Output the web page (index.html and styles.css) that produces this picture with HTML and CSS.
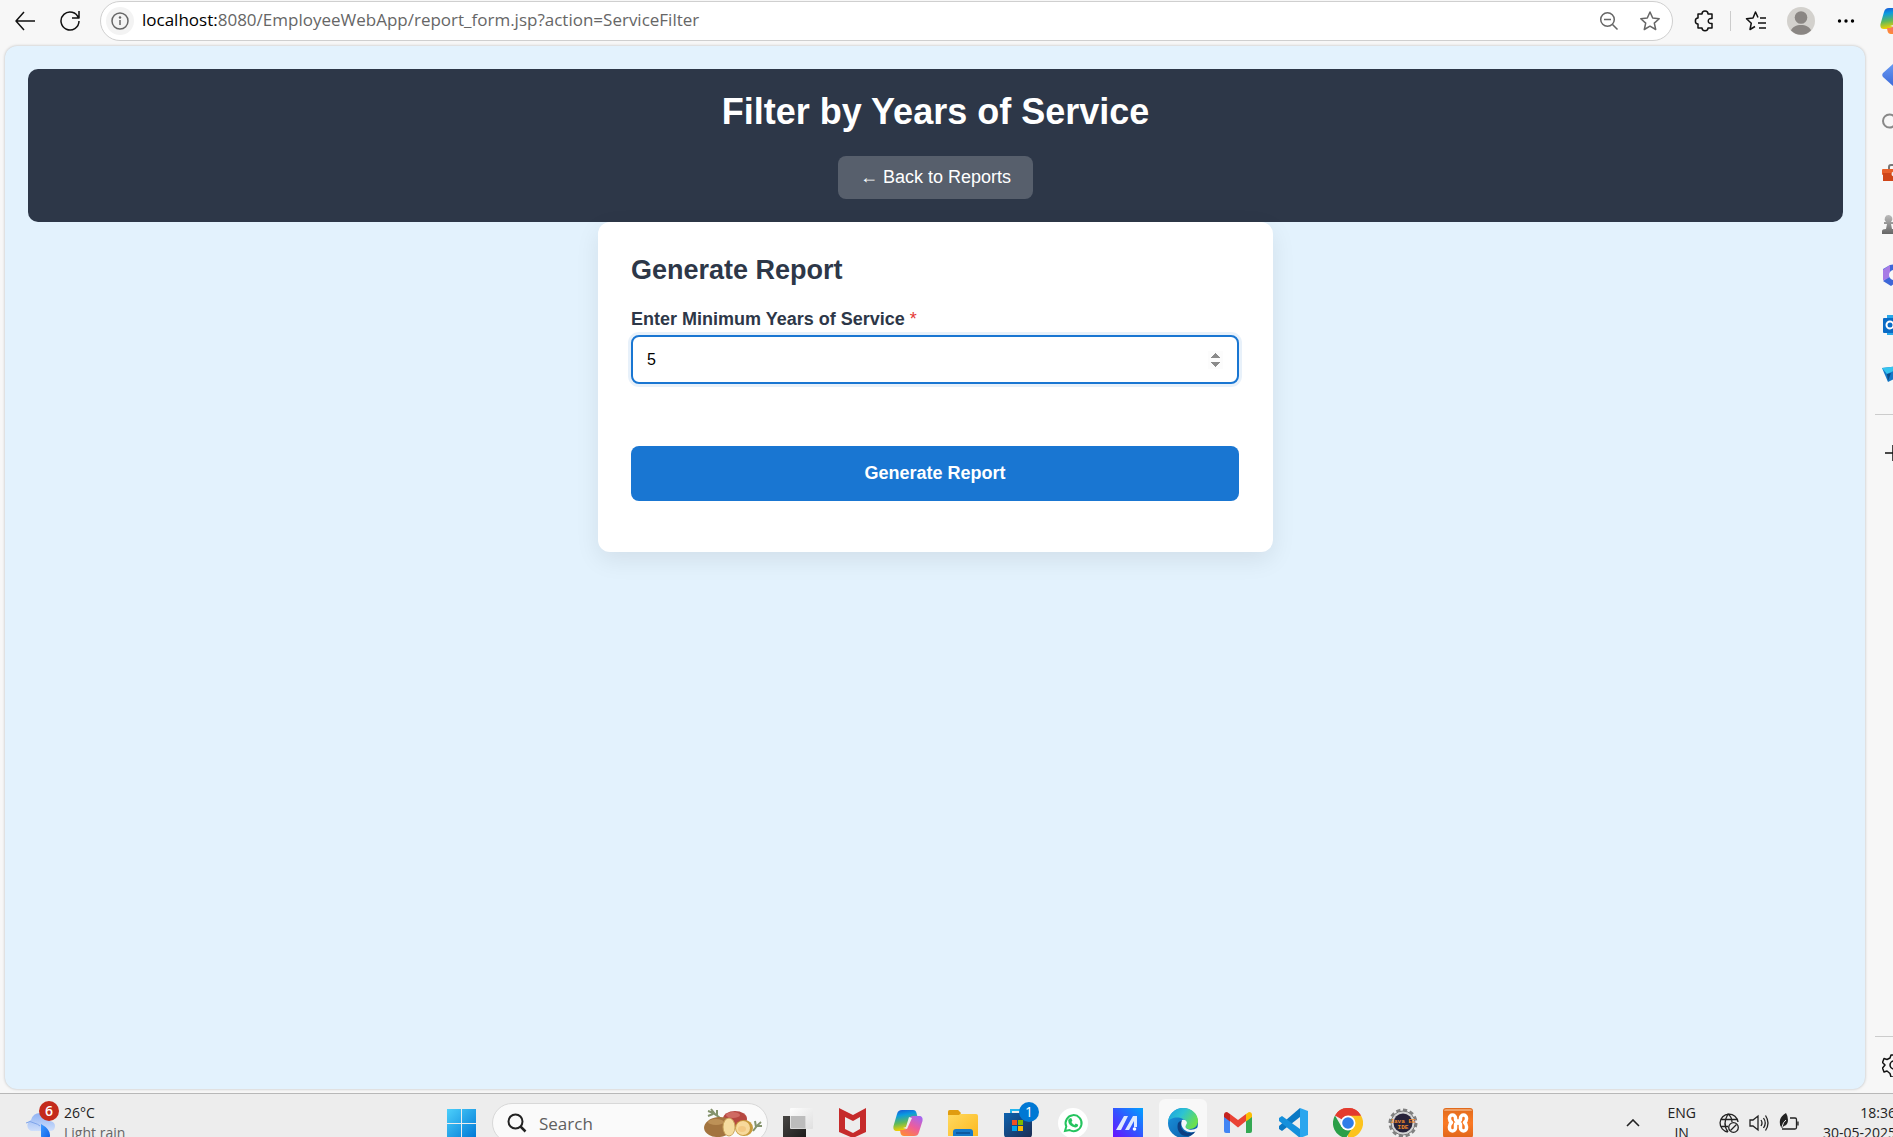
FILE: index.html
```html
<!DOCTYPE html>
<html lang="en">
<head>
<meta charset="utf-8">
<title>Filter by Years of Service</title>
<link rel="stylesheet" href="styles.css">
</head>
<body>
<svg class="defs" aria-hidden="true">
  <defs>
    <linearGradient id="cop1" x1="0" y1="0" x2="0.2" y2="1"><stop offset="0" stop-color="#1b4fd8"/><stop offset=".3" stop-color="#0a9be0"/><stop offset=".65" stop-color="#5fb95b"/><stop offset="1" stop-color="#f5d000"/></linearGradient>
    <linearGradient id="cop2" x1="0.8" y1="0" x2="0.2" y2="1"><stop offset="0" stop-color="#a666f0"/><stop offset=".5" stop-color="#ee5d9a"/><stop offset="1" stop-color="#ff8a35"/></linearGradient>
    <linearGradient id="win" x1="0" y1="0" x2="1" y2="1"><stop offset="0" stop-color="#4cd0fb"/><stop offset="1" stop-color="#0078d6"/></linearGradient>
    <linearGradient id="cloud" x1="0" y1="0" x2="0" y2="1"><stop offset="0" stop-color="#8fb2f3"/><stop offset="1" stop-color="#cfdffb"/></linearGradient>
    <linearGradient id="drop" x1="0" y1="0" x2="1" y2="1"><stop offset="0" stop-color="#3f9bff"/><stop offset="1" stop-color="#0a5ee8"/></linearGradient>
    <linearGradient id="dark" x1="0" y1="0" x2="1" y2="1"><stop offset="0" stop-color="#484644"/><stop offset="1" stop-color="#1d1c1b"/></linearGradient>
    <linearGradient id="glass" x1="0" y1="0" x2="1" y2="1"><stop offset="0" stop-color="#fff"/><stop offset="1" stop-color="#dedede"/></linearGradient>
    <linearGradient id="fold" x1="0" y1="0" x2="1" y2="1"><stop offset="0" stop-color="#ffdc66"/><stop offset="1" stop-color="#fcb91f"/></linearGradient>
    <linearGradient id="store" x1="0" y1="0" x2="1" y2="1"><stop offset="0" stop-color="#0d62b0"/><stop offset="1" stop-color="#1c2c50"/></linearGradient>
    <linearGradient id="asus" x1="1" y1="0" x2="0" y2="1"><stop offset="0" stop-color="#00a2ff"/><stop offset=".5" stop-color="#3355ff"/><stop offset="1" stop-color="#6a10ff"/></linearGradient>
    <linearGradient id="edge1" x1="0" y1="0" x2="1" y2="0.5"><stop offset="0" stop-color="#1b9de2"/><stop offset=".5" stop-color="#2dc3d2"/><stop offset="1" stop-color="#6ae04f"/></linearGradient>
    <linearGradient id="edge2" x1="0" y1="0" x2="1" y2="1"><stop offset="0" stop-color="#1a95e0"/><stop offset="1" stop-color="#0c59a4"/></linearGradient>
    <linearGradient id="xam" x1="0" y1="0" x2="0" y2="1"><stop offset="0" stop-color="#e06a1c"/><stop offset=".5" stop-color="#fb7a24"/><stop offset="1" stop-color="#e0661b"/></linearGradient>
    <linearGradient id="dia" x1="0" y1="0" x2="0" y2="1"><stop offset="0" stop-color="#6a9cf3"/><stop offset="1" stop-color="#3a68d8"/></linearGradient>
    <linearGradient id="pawn" x1="0" y1="0" x2="0" y2="1"><stop offset="0" stop-color="#bbb"/><stop offset="1" stop-color="#666"/></linearGradient>
    <linearGradient id="m365" x1="0" y1="0" x2="0" y2="1"><stop offset="0" stop-color="#4a6bdc"/><stop offset=".5" stop-color="#8a7bea"/><stop offset="1" stop-color="#d98af0"/></linearGradient>
    <symbol id="copilot" viewBox="0 0 30 28">
      <path fill="url(#cop1)" d="M9 1h11c2 0 3 1 3.500 3l1 4h-4c-3 0-4 1-5 4l-2 6c-1 3-2 4-4 4H4c-3 0-4-2-3.500-5L4 5c1-3 2-4 5-4z"/>
      <path fill="url(#cop2)" d="M21 27H11c-2 0-3-1-3.500-3L7 21h3c2 0 3-1 4-4l2-6c1-3 2-4 4-4h6c3 0 4 2 3.500 5L26 23c-1 3-2 4-5 4z"/>
      <path fill="#ededed" d="M16 8l3 1-5 11-4-1 3-1z"/>
    </symbol>
  </defs>
</svg>
<div class="screen">
  <header class="toolbar">
    <button class="tool back" aria-label="Back"><svg width="22" height="20" viewBox="0 0 22 20"><path d="M10 1 2 10l8 9M2 10h19" class="line"/></svg></button>
    <button class="tool reload" aria-label="Reload"><svg width="22" height="22" viewBox="0 0 22 22"><path d="M19.500 8A9 9 0 1 0 20 11M20 1v7h-7" class="line"/></svg></button>
    <div class="address">
      <button class="tool info" aria-label="Site information"><svg width="20" height="20" viewBox="0 0 20 20"><circle cx="10" cy="10" r="8" class="line grey"/><path d="M10 9v5" class="line grey"/><circle cx="10" cy="6.500" r="1.200" fill="#666"/></svg></button>
      <span class="url"><b>localhost:</b>8080/EmployeeWebApp/report_form.jsp?action=ServiceFilter</span>
      <button class="tool" aria-label="Zoom"><svg width="20" height="20" viewBox="0 0 20 20"><circle cx="8.500" cy="8.500" r="6.800" class="line grey"/><path d="M5 8.500h7M13.500 13.500l5 5" class="line grey"/></svg></button>
      <button class="tool" aria-label="Add to favorites"><svg width="22" height="22" viewBox="0 0 22 22"><path d="M11 2l2.700 6 6.500.7-4.900 4.400 1.400 6.400L11 16.200l-5.700 3.300 1.400-6.400L1.800 8.700l6.500-.7z" class="line grey"/></svg></button>
    </div>
    <div class="tools">
      <button class="tool" aria-label="Extensions"><svg width="22" height="22" viewBox="0 0 22 22"><path d="M4 4h4c0-4 6-4 6 0h4v4.500c-5-1-5 6 0 5V18h-4c0 3.500-6 3.500-6 0H4v-4c-3.500 0-3.500-6 0-6z" class="line"/></svg></button>
      <span class="rule"></span>
      <button class="tool" aria-label="Favorites"><svg width="22" height="22" viewBox="0 0 22 22"><path d="M13 7.500 10.500 2 8 8l-6.500.7 4.800 4.500L5 19.500l5-3M15 8h6M13 13h8M14 18h7" class="line"/></svg></button>
      <button class="tool" aria-label="Profile"><svg width="28" height="28" viewBox="0 0 28 28"><circle cx="14" cy="14" r="14" fill="#d3d1cd"/><circle cx="14" cy="10.500" r="6.300" fill="#8a8683"/><path d="M4 23.500c2-7.500 18-7.500 20 0A14 14 0 0 1 4 23.500z" fill="#8a8683"/></svg></button>
      <button class="tool" aria-label="Settings and more"><svg width="18" height="6" viewBox="0 0 18 6"><circle cx="2.500" cy="3" r="1.700"/><circle cx="9" cy="3" r="1.700"/><circle cx="15.500" cy="3" r="1.700"/></svg></button>
      <button class="tool copilot" aria-label="Copilot"><svg width="30" height="28"><use href="#copilot"/></svg></button>
    </div>
  </header>

  <div class="middle">
    <main class="page">
      <section class="banner">
        <h1>Filter by Years of Service</h1>
        <a class="backlink" href="#reports">← Back to Reports</a>
      </section>
      <form class="card">
        <h2>Generate Report</h2>
        <label for="years">Enter Minimum Years of Service <span class="req">*</span></label>
        <input id="years" type="number" value="5" required>
        <button class="submit" type="submit">Generate Report</button>
      </form>
    </main>
    <nav class="side" aria-label="Sidebar">
      <svg width="24" height="24" viewBox="0 0 24 24"><path d="M1 10 12 0l12 12-12 12L1 14q-1.500-2 0-4z" fill="url(#dia)"/></svg>
      <svg width="24" height="24" viewBox="0 0 24 24"><circle cx="7.500" cy="8" r="6.500" fill="none" stroke="#888" stroke-width="2"/><path d="M12 13l8 8" stroke="#888" stroke-width="2"/></svg>
      <svg width="24" height="24" viewBox="0 0 24 24"><path d="M7 7V4q0-2 2-2h6q2 0 2 2v3" fill="none" stroke="#777" stroke-width="2"/><rect y="6" width="24" height="6" rx="1" fill="#e8602a"/><path d="M1 10h22v8H1z" fill="#cf4518"/><circle cx="12" cy="11" r="2.500" fill="#eee"/></svg>
      <svg width="24" height="24" viewBox="0 0 24 24"><path d="M7 2a4 4 0 0 1 2 7h2v2H9l1 5h1v5H0v-3q0-2 4-2l1-5H2V9h2A4 4 0 0 1 7 2z" fill="url(#pawn)"/></svg>
      <svg width="24" height="24" viewBox="0 0 24 24"><path d="M8 2 1 6v11l8 5 10-5V6z" fill="url(#m365)"/><path d="M1 17V7l7-5v11z" fill="#a77be5"/><path d="M8 2v12l-7 4 8 5 4-3V1z" fill="#3d67d8"/><circle cx="12" cy="12" r="5" fill="#f7f7f7"/></svg>
      <svg width="24" height="24" viewBox="0 0 24 24"><path d="M5 2h18v20H5z" fill="#28a8ea"/><rect x="1" y="5" width="15" height="15" rx="1" fill="#0a6bc5"/><circle cx="8" cy="12" r="3.500" fill="none" stroke="#fff" stroke-width="2"/></svg>
      <svg width="24" height="24" viewBox="0 0 24 24"><path d="M0 5l24-3-12 14-6 3z" fill="#1378c8"/><path d="M0 5l24-3L5 11z" fill="#35c5ef"/><path d="M5 11l4-1-3 8z" fill="#0c4b87"/></svg>
      <hr>
      <svg width="24" height="24" viewBox="0 0 24 24"><path d="M3 12h16M11 4v16" class="line"/></svg>
      <hr class="low">
      <svg width="24" height="24" viewBox="0 0 24 24"><path d="M9 2h5l1 4 3 1.500 4-1 2 3.500-3 3 3 3-2 3.500-4-1-3 1.500-1 4H9l-1-3.500L5 18l-3 1-1.500-4L3 12 .5 9.500 2 5.500l3 1L8 5z" class="line"/><circle cx="12" cy="12" r="4" class="line"/></svg>
    </nav>
  </div>

  <footer class="taskbar">
    <div class="weather">
      <div class="badged">
        <svg width="30" height="36" viewBox="0 0 30 36"><path d="M6 26a6 6 0 0 1 0-11q2-7 9-7 8 0 10 8 5 1 5 5 0 5-5 5z" fill="url(#cloud)"/><path d="M1 18q4-3 8 0 4 1 6 3" fill="none" stroke="#7ea4ea"/><path d="M16 19q9 5 9 11a4.500 4.500 0 0 1-9 1z" fill="url(#drop)"/></svg>
        <span class="badge red">6</span>
      </div>
      <div class="lines"><span>26°C</span><span class="dim">Light rain</span></div>
    </div>
    <div class="apps">
      <svg width="30" height="30" viewBox="0 0 30 30"><path d="M0 1h14v14H0zM15 1h14v14H15zM0 16h14v14H0zM15 16h14v14H15z" fill="url(#win)"/></svg>
      <div class="search">
        <svg width="20" height="20" viewBox="0 0 20 20"><circle cx="8.500" cy="8.500" r="7" fill="none" stroke="#222" stroke-width="2"/><path d="M13.500 13.500l5 5" stroke="#222" stroke-width="2.500"/></svg>
        <input type="text" placeholder="Search" aria-label="Search">
        <svg width="58" height="32" viewBox="0 0 58 32"><path d="M17 12Q11 6 4 4M13 9l0-6M9 7 4 9M11 7 7 2M49 24q4-6 8-9M52 20l-1-6M53 19l5 0" fill="none" stroke="#84936c" stroke-width="2"/><ellipse cx="31" cy="12" rx="12" ry="8" fill="#b64740"/><ellipse cx="29" cy="8" rx="7" ry="3" fill="#cf6a62"/><ellipse cx="15" cy="20" rx="15" ry="10" fill="#a3743f" transform="rotate(-5 15 20)"/><ellipse cx="12" cy="15" rx="8" ry="3" fill="#bd9157"/><ellipse cx="40" cy="21" rx="9" ry="8" fill="#c79a3c"/><ellipse cx="25" cy="20" rx="6" ry="9" fill="#f5dc9f" stroke="#c9a35c"/><ellipse cx="39" cy="21" rx="7" ry="7" fill="#f7d99b"/><ellipse cx="38" cy="22" rx="4" ry="3" fill="#f3c983"/></svg>
      </div>
      <svg width="30" height="30" viewBox="0 0 30 30"><path d="M0 8h23v22H0z" fill="url(#dark)"/><rect x="7" width="23" height="21" rx="1" fill="url(#glass)" fill-opacity=".9"/><path d="M8 8h14v12H8z" fill="#bcbcbc"/></svg>
      <svg width="30" height="30" viewBox="0 0 30 30"><path d="M1 0l14 7 13-7v24l-13 6-14-6zM7 9v12l8 4 7-4V9l-7 4z" fill="#c62b2b" fill-rule="evenodd"/></svg>
      <svg width="30" height="30"><use href="#copilot"/></svg>
      <svg width="30" height="30" viewBox="0 0 30 30"><path d="M0 4q0-2 2-2h8l3 4h15q2 0 2 2v20H0z" fill="url(#fold)"/><path d="M0 4q0-2 2-2h8l3 3-2 2H0z" fill="#e09c10"/><path d="M5 28v-4q0-3 3-3h14q3 0 3 3v4z" fill="#1479c9"/><path d="M8 25h14" stroke="#0a4f91" stroke-width="1.500"/></svg>
      <div class="badged">
        <svg width="30" height="30" viewBox="0 0 30 30"><path d="M8 6V2h14v4" fill="none" stroke="#23b5ee" stroke-width="2"/><path d="M1 5h28v21q0 4-4 4H5q-4 0-4-4z" fill="url(#store)"/><path d="M9 12h5v5H9z" fill="#f25022"/><path d="M15 12h5v5h-5z" fill="#7fba00"/><path d="M9 18h5v5H9z" fill="#00a4ef"/><path d="M15 18h5v5h-5z" fill="#ffb900"/></svg>
        <span class="badge blue">1</span>
      </div>
      <svg width="30" height="30" viewBox="0 0 30 30"><circle cx="15" cy="15" r="15" fill="#fff"/><path d="M7 23l1.300-4.600A8 8 0 1 1 11.500 22z" fill="none" stroke="#25c45f" stroke-width="2"/><path d="M11.500 10.500l1.700-.5 1.200 2.800-1 1.300q1 2 3 2.800l1.300-1.300 2.500 1.200q-.2 2.700-3 2.700-7-1.500-7-7 .2-1.500 1.300-2z" fill="#25c45f"/></svg>
      <svg width="30" height="30" viewBox="0 0 30 30"><path d="M0 0h30v30H0z" fill="url(#asus)"/><path d="M3 22 11 8h4L8 22zM12 22 20 8h4v11h-3V13l-5 9z" fill="#dfe9ff"/><circle cx="21.500" cy="21" r="1.800" fill="#fff"/></svg>
      <div class="active">
        <svg width="30" height="30" viewBox="0 0 30 30"><circle cx="15" cy="15" r="15" fill="url(#edge2)"/><path d="M0 14C1 5 8 0 15 0c9 0 15 6 15 13 0 5-4 8-8 8-4 0-6-2-5-4 2-2 1-5-2-6C9 8 2 10 0 14z" fill="url(#edge1)"/><path d="M10 15q-2 8 4 12 8 3 13-3-9 3-13-3-2-3 0-8-3 0-4 2z" fill="#0d3f82"/><path d="M14 12q4-1 5 3l-1 2q-2 3 3 4.500 4 1 9-2l-2 4q-8 2-12-2-4-4-2-9.500z" fill="#f4f7fa"/></svg>
      </div>
      <svg width="30" height="30" viewBox="0 0 30 30"><path d="M1 8l6 5v12H3q-2 0-2-2z" fill="#4285f4"/><path d="M29 8l-6 5v12h4q2 0 2-2z" fill="#34a853"/><path d="M7 6l8 6 8-6v7l-8 6.500L7 13z" fill="#ea4335"/><path d="M1 7q0-3 3-3l3 2v7.500l-6-4.500z" fill="#c5221f"/><path d="M29 7q0-3-3-3l-3 2v7.500l6-4.500z" fill="#fbbc04"/></svg>
      <svg width="30" height="30" viewBox="0 0 30 30"><path d="M22 0l8 3v24l-8 3z" fill="#2ba6ee"/><path d="M22 0v9L4 23l-3-2v-3z" fill="#0a78c4"/><path d="M22 30v-9L4 8l-3 2v3z" fill="#1590dc"/></svg>
      <svg width="30" height="30" viewBox="0 0 30 30"><path d="M15 15 2 7.500A15 15 0 0 1 28 7.500z" fill="#e33b2e"/><path d="M15 15V7.500h13A15 15 0 0 1 15 30z" fill="#fcc31e"/><path d="M2 7.500l6.500 11.300L15 22l3 0-5 8A15 15 0 0 1 2 7.500z" fill="#2b9f48"/><path d="M2 7.500A15 15 0 0 1 28 7.500H15z" fill="#e33b2e"/><circle cx="15" cy="15" r="7.500" fill="#fff"/><circle cx="15" cy="15" r="5.800" fill="#2f7de9"/></svg>
      <svg width="30" height="30" viewBox="0 0 30 30"><circle cx="15" cy="15" r="12.500" fill="none" stroke="#808080" stroke-width="4" stroke-dasharray="4 2.500"/><circle cx="15" cy="15" r="12" fill="#d4d4d4" stroke="#777"/><circle cx="15" cy="15" r="9.500" fill="#28233a"/><text x="15" y="15" class="ee">Java EE</text><text x="15" y="21" class="ee">IDE</text></svg>
      <svg width="30" height="30" viewBox="0 0 30 30"><rect width="30" height="30" rx="3" fill="url(#xam)"/><path d="M1 3q0-2 2-2h24q2 0 2 2z" fill="#f0a066"/><path d="M12.500 11V10a3 3 0 0 0-6 0v1q0 2 2 3.500-2 1.500-2 4v1.500a3 3 0 0 0 6 0v-3q0-2 2.500-2t2.500 2v3a3 3 0 0 0 6 0v-1.500q0-2.500-2-4 2-1.500 2-3.500v-1a3 3 0 0 0-6 0v1q0 2-2.500 2t-2.500-2z" fill="none" stroke="#fff" stroke-width="3.500" stroke-linejoin="round"/></svg>
    </div>
    <div class="tray">
      <svg class="chev" width="14" height="8" viewBox="0 0 14 8"><path d="M1 7l6-6 6 6" fill="none" stroke="#222" stroke-width="1.600"/></svg>
      <div class="lines lang"><span>ENG</span><span>IN</span></div>
      <div class="status">
        <svg width="20" height="20" viewBox="0 0 20 20"><path d="M9 19A9 9 0 1 1 19 9M2 6.500h16M2 13.500h7M9 19q-6-8 0-18 4 3 4 8" class="thin"/><circle cx="14.500" cy="14.500" r="4.800" class="thin"/><path d="M11.500 17.500l6-6" class="thin"/></svg>
        <svg width="20" height="20" viewBox="0 0 20 20"><path d="M1 7h3l5-4v14l-5-4H1zM12 7q2 3 0 6M14.500 5q3.500 5 0 10M16.500 2.500q5 7.500 0 15" class="thin"/></svg>
        <svg width="20" height="20" viewBox="0 0 20 20"><path d="M11 5h5q1.500 0 1.500 1.500v8q0 1.500-1.500 1.500H3M19 8.500v4" class="thin"/><path d="M1 7q1-4 6-7 2 3 2 7 0 5-4 6l-2 2q-3-3-2-8z" fill="#222"/><path d="M3 14q1-5 4-7" stroke="#ededed" fill="none"/></svg>
      </div>
      <div class="lines clock"><span>18:36</span><span>30-05-2025</span></div>
    </div>
  </footer>
</div>
</body>
</html>
```
FILE: styles.css
```css
* { box-sizing: border-box; }

body {
  margin: 0;
  height: 100vh;
  overflow: hidden;
  background: #f7f7f7;
  font-family: "Liberation Sans", Arial, sans-serif;
}

svg { display: block; flex: none; }
.defs { position: absolute; width: 0; height: 0; }
.line { fill: none; stroke: #111; stroke-width: 1.5; stroke-linejoin: round; }
.line.grey { stroke: #666; }
.thin { fill: none; stroke: #222; stroke-width: 1.3; }

/* The desktop extends past the right and bottom edges of the window */
.screen {
  width: calc(100% + 27px);
  height: calc(100vh + 15px);
  display: flex;
  flex-direction: column;
  overflow: hidden;
}

/* Browser toolbar */
.toolbar {
  display: flex;
  align-items: center;
  height: 46px;
  padding: 1px 10px 5px 14px;
  font-family: "Open Sans", "Noto Sans", sans-serif;
}
.tool {
  display: flex;
  align-items: center;
  justify-content: center;
  border: 0;
  padding: 0;
  background: none;
}
.reload { margin-left: 23px; }
.address {
  flex: 1;
  display: flex;
  align-items: center;
  gap: 20px;
  height: 40px;
  margin-left: 19px;
  padding: 0 11px 0 5px;
  background: #fff;
  border: 1px solid #cfcfcf;
  border-radius: 20px;
}
.info {
  width: 28px;
  height: 28px;
  border-radius: 14px;
  background: #f3f3f3;
}
.url {
  flex: 1;
  margin-left: -12px;
  font-size: 17px;
  line-height: 22px;
  padding-bottom: 2px;
  color: #666;
}
.url b { font-weight: 400; color: #000; }
.tools { display: flex; align-items: center; margin-left: 21px; gap: 14px; }
.rule { width: 1px; height: 20px; background: #ccc; }
.tools .rule + .tool { margin-right: 6px; }
.tools .tool:nth-child(4) { margin-right: 8px; }
.copilot { margin-left: 11px; }

/* Web page and browser sidebar */
.middle { flex: 1; display: flex; min-height: 0; }
.page {
  flex: 1;
  margin: 0 0 4px 5px;
  padding: 23px 22px 0 23px;
  background: #e3f2fd;
  border-radius: 12px;
  box-shadow: 0 0 3px rgba(0, 0, 0, .25);
}
.banner {
  display: flex;
  flex-direction: column;
  align-items: center;
  gap: 23px;
  padding: 22px 24px 23px;
  background: #2d3748;
  border-radius: 10px;
  color: #fff;
}
h1 { margin: 0; font-size: 36px; line-height: 42px; }
.backlink {
  padding: 11px 22px 12px;
  border-radius: 8px;
  background: rgba(255, 255, 255, .2);
  color: #fff;
  font-size: 18px;
  line-height: 20px;
  text-decoration: none;
}
.card {
  display: flex;
  flex-direction: column;
  max-width: 675px;
  margin: 0 auto;
  padding: 32px 34px 51px 33px;
  background: #fff;
  border-radius: 12px;
  box-shadow: 0 8px 24px rgba(0, 0, 0, .08);
  color: #2d3748;
}
h2 { margin: 0 0 23px; font-size: 27px; line-height: 32px; }
label { margin-bottom: 6px; font-size: 18px; line-height: 20px; font-weight: 700; }
.req { color: #e53935; font-weight: 400; }
.card input {
  height: 49px;
  padding: 0 14px;
  border: 2px solid #1976d2;
  border-radius: 8px;
  outline: 0;
  box-shadow: 0 0 0 3px rgba(25, 118, 210, .1);
  background: #fff;
  color: #000;
  font: 16px "Liberation Sans", Arial, sans-serif;
}
.card input::-webkit-inner-spin-button { opacity: 1; }
.submit {
  height: 55px;
  margin-top: 62px;
  border: 0;
  border-radius: 8px;
  background: #1976d2;
  color: #fff;
  font: 700 18px "Liberation Sans", Arial, sans-serif;
}

.side {
  width: 55px;
  display: flex;
  flex-direction: column;
  gap: 26px;
  padding: 17px 0 16px 17px;
}
.side hr {
  width: 100%;
  height: 1px;
  margin: 1px 0 0 -7px;
  border: 0;
  background: #ccc;
}
.side hr.low { margin-top: auto; margin-bottom: -10px; }

/* Windows taskbar */
.taskbar {
  display: grid;
  grid-template-columns: 1fr auto 1fr;
  align-items: center;
  height: 59px;
  background: #ededed;
  border-top: 1px solid #b8b8b8;
  font-family: "Open Sans", "Noto Sans", sans-serif;
  font-size: 14px;
}
.weather { display: flex; align-items: center; gap: 9px; padding-left: 25px; }
.lines { display: flex; flex-direction: column; line-height: 20px; color: #222; }
.dim { color: #666; }
.badged { position: relative; }
.badge {
  position: absolute;
  top: -6px;
  right: -6px;
  width: 20px;
  height: 20px;
  border-radius: 10px;
  color: #fff;
  line-height: 20px;
  text-align: center;
}
.badge.red { top: -4px; right: -4px; background: #c42b1c; font-weight: 600; }
.badge.blue { background: #0078d4; }
.apps { display: flex; align-items: center; gap: 25px; }
.search {
  display: flex;
  align-items: center;
  gap: 12px;
  width: 276px;
  height: 40px;
  margin: 0 -10px;
  padding: 0 5px 0 14px;
  border: 1px solid #d8d8d8;
  border-radius: 20px;
  background: #fafafa;
}
.search input {
  flex: 1;
  min-width: 0;
  border: 0;
  padding: 0;
  background: none;
  font: 17px "Open Sans", "Noto Sans", sans-serif;
}
.search input::placeholder { color: #5f5f5f; }
.active {
  margin: 0 -9px;
  padding: 9px;
  border-radius: 6px;
  background: #f8f8f8;
}
.ee { font: 700 6px "Liberation Mono", monospace; fill: #f08a2a; text-anchor: middle; }
.tray { display: flex; align-items: center; justify-content: flex-end; padding-right: 24px; }
.lang { margin: 0 23px 0 27px; text-align: center; }
.status { display: flex; gap: 10px; margin-right: 24px; }
.clock { text-align: right; }
```
